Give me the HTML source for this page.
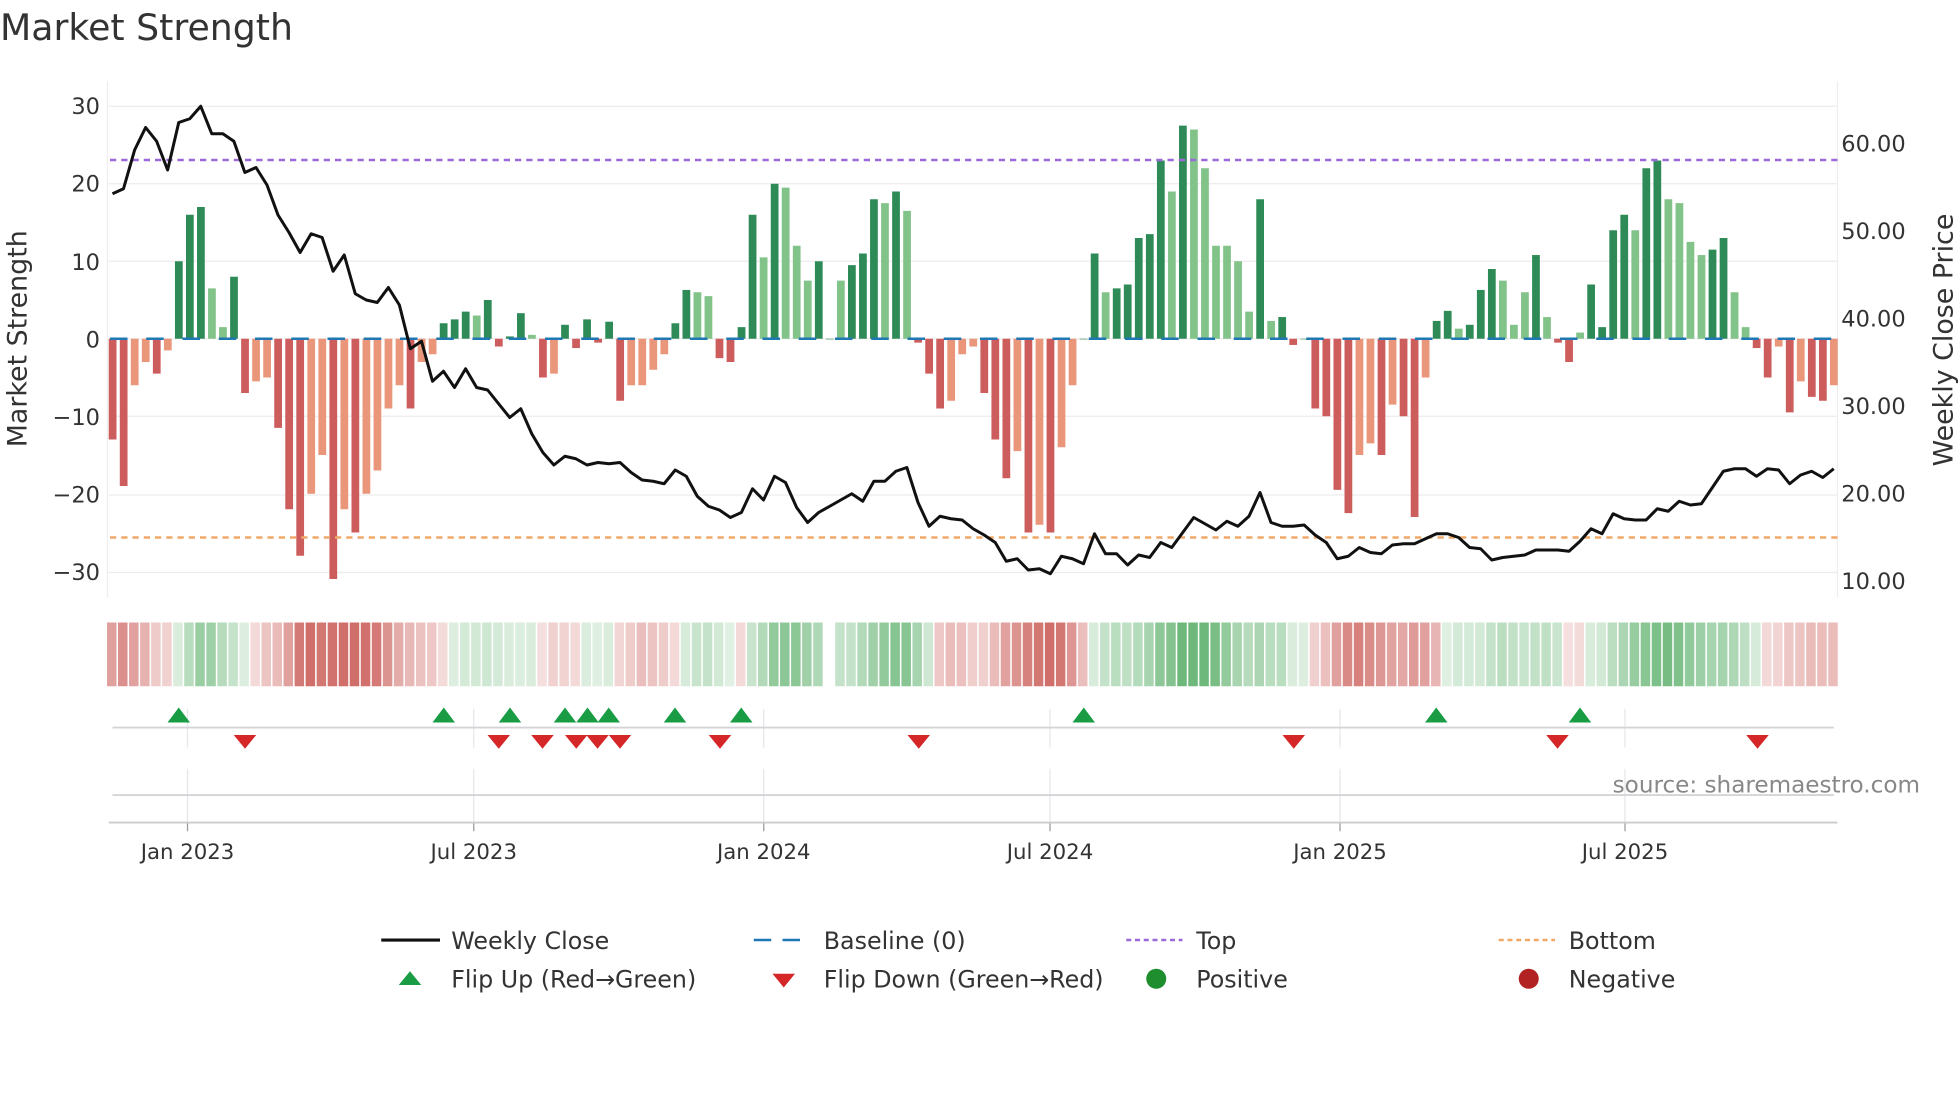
<!DOCTYPE html>
<html><head><meta charset="utf-8"><style>
html,body{margin:0;padding:0;background:#fff;width:1960px;height:1102px;overflow:hidden}
svg{display:block}
text{font-family:"DejaVu Sans","Liberation Sans",sans-serif;fill:#333}
</style></head><body>
<svg id="s" width="1960" height="1102" viewBox="0 0 1568 881.6" xmlns="http://www.w3.org/2000/svg">
<rect width="1568" height="882" fill="#fff"/>
<text x="0" y="32" font-size="29">Market Strength</text>
<g id="grid"></g>
<g id="bars"></g>
<g id="heat"></g>
<g id="low"></g>
<text x="80" y="91" font-size="18" text-anchor="end">30</text>
<text x="80" y="153" font-size="18" text-anchor="end">20</text>
<text x="80" y="216" font-size="18" text-anchor="end">10</text>
<text x="80" y="278" font-size="18" text-anchor="end">0</text>
<text x="80" y="340" font-size="18" text-anchor="end">−10</text>
<text x="80" y="402" font-size="18" text-anchor="end">−20</text>
<text x="80" y="464" font-size="18" text-anchor="end">−30</text>
<text x="1473" y="121" font-size="18">60.00</text>
<text x="1473" y="191" font-size="18">50.00</text>
<text x="1473" y="261" font-size="18">40.00</text>
<text x="1473" y="331" font-size="18">30.00</text>
<text x="1473" y="401" font-size="18">20.00</text>
<text x="1473" y="471" font-size="18">10.00</text>
<text transform="translate(21,271) rotate(-90)" font-size="21.5" text-anchor="middle">Market Strength</text>
<text transform="translate(1562,272) rotate(-90)" font-size="21.5" text-anchor="middle">Weekly Close Price</text>
<text x="1536" y="634" font-size="18.5" text-anchor="end" style="fill:#888">source: sharemaestro.com</text>
<text x="150" y="687" font-size="17" text-anchor="middle">Jan 2023</text>
<text x="379" y="687" font-size="17" text-anchor="middle">Jul 2023</text>
<text x="611" y="687" font-size="17" text-anchor="middle">Jan 2024</text>
<text x="840" y="687" font-size="17" text-anchor="middle">Jul 2024</text>
<text x="1072" y="687" font-size="17" text-anchor="middle">Jan 2025</text>
<text x="1300" y="687" font-size="17" text-anchor="middle">Jul 2025</text>
<line x1="305" y1="752" x2="352" y2="752" stroke="#111" stroke-width="2.5"/>
<text x="361" y="759" font-size="19">Weekly Close</text>
<line x1="603" y1="752" x2="647" y2="752" stroke="#1f77b4" stroke-width="2" stroke-dasharray="14 9"/>
<text x="659" y="759" font-size="19">Baseline (0)</text>
<line x1="901" y1="752" x2="946" y2="752" stroke="#9b6ad8" stroke-width="2" stroke-dasharray="4 3"/>
<text x="957" y="759" font-size="19">Top</text>
<line x1="1199" y1="752" x2="1244" y2="752" stroke="#f0a868" stroke-width="2" stroke-dasharray="4 3"/>
<text x="1255" y="759" font-size="19">Bottom</text>
<polygon points="319,788 337,788 328,777" fill="#1a9c45"/>
<text x="361" y="790" font-size="19">Flip Up (Red→Green)</text>
<polygon points="618,779 636,779 627,790" fill="#d62728"/>
<text x="659" y="790" font-size="19">Flip Down (Green→Red)</text>
<circle cx="925" cy="783" r="8" fill="#1e8e2e"/>
<text x="957" y="790" font-size="19">Positive</text>
<circle cx="1223" cy="783" r="8" fill="#b22222"/>
<text x="1255" y="790" font-size="19">Negative</text>
</svg>
<script>
var NS="http://www.w3.org/2000/svg";
function el(p,t,a){var e=document.createElementNS(NS,t);for(var k in a)e.setAttribute(k,a[k]);p.appendChild(e);return e;}
var g=document.getElementById('grid'),b=document.getElementById('bars'),h=document.getElementById('heat'),lo=document.getElementById('low');
[85,147,209,271,333,396,458].forEach(function(y){el(g,'line',{x1:87,x2:1470,y1:y,y2:y,stroke:'#ececec','stroke-width':1});});
el(g,'line',{x1:86,x2:86,y1:65,y2:478,stroke:'#eee','stroke-width':1});
el(g,'line',{x1:1470,x2:1470,y1:65,y2:478,stroke:'#eee','stroke-width':1});
var V=[[-13,1],[-19,1],[-6,0],[-3,0],[-4.5,1],[-1.5,0],[10,1],[16,1],[17,1],[6.5,0],[1.5,0],[8,1],[-7,1],[-5.5,0],[-5,0],[-11.5,1],[-22,1],[-28,1],[-20,0],[-15,0],[-31,1],[-22,0],[-25,1],[-20,0],[-17,0],[-9,0],[-6,0],[-9,1],[-3,0],[-2,0],[2,1],[2.5,1],[3.5,1],[3,0],[5,1],[-1,1],[0.3,1],[3.3,1],[0.5,0],[-5,1],[-4.5,0],[1.8,1],[-1.2,1],[2.5,1],[-0.5,1],[2.2,1],[-8,1],[-6,0],[-6,0],[-4,0],[-2,0],[2,1],[6.3,1],[6,0],[5.5,0],[-2.5,1],[-3,1],[1.5,1],[16,1],[10.5,0],[20,1],[19.5,0],[12,0],[7.5,0],[10,1],[0,1],[7.5,0],[9.5,1],[11,1],[18,1],[17.5,0],[19,1],[16.5,0],[-0.5,1],[-4.5,1],[-9,1],[-8,0],[-2,0],[-1,0],[-7,1],[-13,1],[-18,1],[-14.5,0],[-25,1],[-24,0],[-25,1],[-14,0],[-6,0],[0,1],[11,1],[6,0],[6.5,1],[7,1],[13,1],[13.5,1],[23,1],[19,0],[27.5,1],[27,0],[22,0],[12,0],[12,0],[10,0],[3.5,0],[18,1],[2.3,0],[2.8,1],[-0.8,1],[0,1],[-9,1],[-10,1],[-19.5,1],[-22.5,1],[-15,0],[-13.5,0],[-15,1],[-8.5,0],[-10,1],[-23,1],[-5,0],[2.3,1],[3.6,1],[1.3,0],[1.8,1],[6.3,1],[9,1],[7.5,0],[1.8,0],[6,0],[10.8,1],[2.8,0],[-0.5,1],[-3,1],[0.8,0],[7,1],[1.5,1],[14,1],[16,1],[14,0],[22,1],[23,1],[18,0],[17.5,0],[12.5,0],[10.8,0],[11.5,1],[13,1],[6,0],[1.5,0],[-1.2,1],[-5,1],[-1,0],[-9.5,1],[-5.5,0],[-7.5,1],[-8,1],[-6,0]];
var n=V.length,dx=(1467-90)/(n-1);
function X(i){return 90+i*dx;}
V.forEach(function(d,i){var v=d[0],y0=271,y=271-v*6.2;var c=v>=0?(d[1]?'#2e8b57':'#82c38a'):(d[1]?'#cd5c5c':'#e9967a');
 el(b,'rect',{x:X(i)-3,y:Math.min(y,y0),width:6.2,height:Math.max(Math.abs(y-y0),0.5),fill:c});});
el(b,'line',{x1:88,x2:1470,y1:271,y2:271,stroke:'#1f77b4','stroke-width':2,'stroke-dasharray':'14 15'});
el(b,'line',{x1:88,x2:1470,y1:128,y2:128,stroke:'#9b6ad8','stroke-width':2,'stroke-dasharray':'5 4'});
el(b,'line',{x1:88,x2:1470,y1:430,y2:430,stroke:'#f0a868','stroke-width':2,'stroke-dasharray':'5 4'});
var P=[155,151,120,102,113,136,98,95,85,107,107,113,138,134,148,172,186,202,187,190,217,204,235,240,242,230,244,279,273,305,297,310,295,310,312,323,334,327,347,362,372,365,367,372,370,371,370,378,384,385,387,376,381,397,405,408,414,410,391,400,381,386,406,418,410,405,400,395,401,385,385,377,374,402,421,413,415,416,423,428,434,449,447,456,455,459,445,447,451,427,443,443,452,444,446,434,438,426,414,419,424,417,421,413,394,418,421,421,420,428,434,447,445,438,442,443,436,435,435,431,427,427,430,438,439,448,446,445,444,440,440,440,441,433,423,427,411,415,416,416,407,409,401,404,403,390,377,375,375,381,375,376,387,380,377,382,375];
var pts=P.map(function(y,i){return (90+i*(1467-90)/(P.length-1)).toFixed(1)+','+y;}).join(' ');
el(b,'polyline',{points:pts,fill:'none',stroke:'#111','stroke-width':2.4,'stroke-linejoin':'round'});
V.forEach(function(d,i){if(i==65)return;var s=0,c=0;for(var k=i-2;k<=i;k++){if(k>=0){s+=V[k][0];c++;}}s/=c;var a=Math.min(0.85,0.18+Math.abs(s)/34);
 var col=s>=0?'rgba(85,172,100,'+a.toFixed(2)+')':'rgba(200,85,80,'+a.toFixed(2)+')';
 el(h,'rect',{x:X(i)-4.4,y:498,width:7.6,height:51,fill:col});});
[150,379,611,840,1072,1300].forEach(function(x){el(lo,'line',{x1:x,x2:x,y1:567,y2:598,stroke:'#e4e6ea','stroke-width':1});el(lo,'line',{x1:x,x2:x,y1:615,y2:658,stroke:'#e4e6ea','stroke-width':1});el(lo,'line',{x1:x,x2:x,y1:658,y2:665,stroke:'#999','stroke-width':1});});
el(lo,'line',{x1:90,x2:1467,y1:582,y2:582,stroke:'#d4d4d8','stroke-width':1.5});
el(lo,'line',{x1:90,x2:1467,y1:636,y2:636,stroke:'#d4d4d8','stroke-width':1.5});
el(lo,'line',{x1:87,x2:1470,y1:658,y2:658,stroke:'#ccc','stroke-width':1.5});
[143,355,408,452,470,487,540,593,867,1149,1264].forEach(function(x){el(lo,'polygon',{points:(x-9)+',578 '+(x+9)+',578 '+x+',566',fill:'#1a9c45'});});
[196,399,434,461,478,496,576,735,1035,1246,1406].forEach(function(x){el(lo,'polygon',{points:(x-9)+',588 '+(x+9)+',588 '+x+',599',fill:'#d62728'});});
</script>
</body></html>
